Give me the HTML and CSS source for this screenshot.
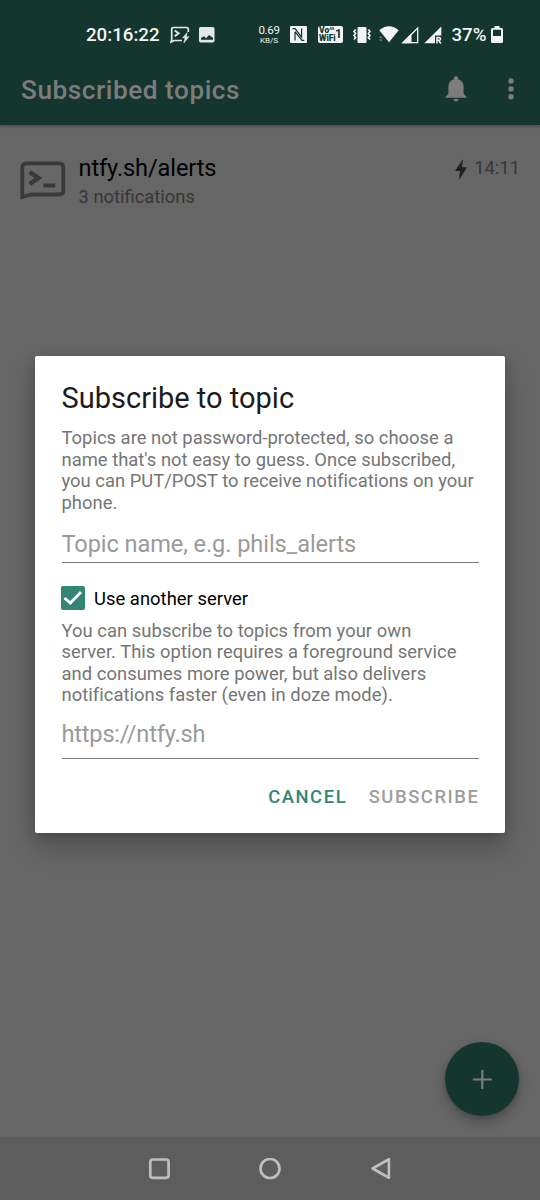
FILE: index.html
```html
<!DOCTYPE html>
<html lang="en">
<head>
<meta charset="utf-8">
<title>Subscribed topics</title>
<link rel="stylesheet" href="styles.css">
</head>
<body>
<div class="screen">
  <header class="top">
    <div class="status">
      <span class="clock">20:16:22</span>
      <svg class="st-ntfy" width="20" height="18" viewBox="0 0 20 18" fill="none" stroke="currentColor"><path stroke-width="1.7" d="M12 14.5H4L1 16.1l.7-2.400V3.200Q1.700 1.500 3.400 1.500H16.500Q18.300 1.500 18.300 3.200V6"/><path stroke-width="2" d="M4.700 4.500L8.600 7.300L4.700 10.200"/><path fill="currentColor" stroke="currentColor" stroke-width=".5" d="M17.200 6.500L12.600 11.800H15L13.800 17L19 10.700H16.300Z"/></svg>
      <svg class="st-image" width="16" height="16" viewBox="0 0 16 16"><rect width="15.500" height="15.500" rx="1.700" fill="currentColor"/><path class="cut" d="M2 12.800V11L5 9.200L7.100 11.300L10 8L14 10.800V12.800Z"/></svg>
      <span class="speed"><b>0.69</b><small>KB/S</small></span>
      <svg class="st-nfc" width="17" height="17" viewBox="0 0 17 17"><rect width="17" height="17" rx="1" fill="currentColor"/><path class="cut-line" stroke-width="1.200" d="M2.500 2.700H5L11.600 11.200V2.500M5 6V14.500M14.300 14.300H12L5 5.600"/></svg>
      <span class="vowifi"><span class="vw-text"><span>Vo<sup>ʌʌ</sup></span><span>WiFi</span></span><span class="vw-one">1</span></span>
      <svg class="st-vibrate" width="18" height="18" viewBox="0 0 18 18"><rect x="4.500" y="1" width="9" height="16" rx="1" fill="currentColor"/><path fill="none" stroke="currentColor" stroke-width="1.700" d="M2.600 3.500L1 5.500L2.600 7.500L1 9.500L2.600 11.500L1 13.500M15.400 3.500L17 5.500L15.400 7.500L17 9.500L15.400 11.500L17 13.500"/></svg>
      <svg class="st-wifi" width="20" height="17" viewBox="0 0 20 17"><path fill="currentColor" d="M.3 4.300Q10-3.800 19.700 4.300L10 16.300Z"/><path class="arrows" d="M0 12l1.800-2 1.800 2zM0 13.500h3.600L1.800 15.500z"/></svg>
      <svg class="st-sig" width="18" height="18" viewBox="0 0 18 18"><path fill="none" stroke="currentColor" stroke-width="1.300" d="M2 16.700L16.700 2V16.700Z"/><path fill="currentColor" d="M.5 17.300L10.500 7.500V17.300Z"/></svg>
      <svg class="st-sig2" width="18" height="18" viewBox="0 0 18 18"><path fill="currentColor" d="M.3 17.300L17.300.5V9.500H11V17.300Z"/><path fill="none" stroke="currentColor" stroke-width="1.500" d="M13 17.500V11.500H15Q16.500 11.500 16.500 12.900T15 14.300H13M14.700 14.300L16.800 17.500"/></svg>
      <span class="percent">37%</span>
      <svg class="st-batt" width="12" height="17" viewBox="0 0 12 17"><path fill="currentColor" fill-rule="evenodd" d="M3.500 0h5v2H10.500Q12 2 12 3.500V15.500Q12 17 10.500 17H1.500Q0 17 0 15.500V3.500Q0 2 1.500 2h2zM2 3.800V10H10V3.800Z"/></svg>
    </div>
    <div class="appbar">
      <h1>Subscribed topics</h1>
      <svg class="bell" width="22" height="26" viewBox="0 0 22 26" fill="currentColor"><path d="M11 .2Q13.200.2 13.200 2.400V3.200Q18.600 4.700 18.600 11V18L21.500 20.700V21.800H.5V20.700L3.400 18V11Q3.400 4.700 8.800 3.200V2.400Q8.800.2 11 .2Z"/><path d="M8.300 23H13.700Q13.300 25.500 11 25.500T8.300 23Z"/></svg>
      <svg class="dots" width="6" height="22" viewBox="0 0 6 22" fill="currentColor"><circle cx="3" cy="3" r="2.700"/><circle cx="3" cy="10.900" r="2.700"/><circle cx="3" cy="18.800" r="2.700"/></svg>
    </div>
  </header>
  <main class="list">
    <div class="row">
      <svg class="topic-icon" width="46" height="40" viewBox="0 0 46 40" fill="none" stroke="currentColor"><path stroke-width="3.800" d="M2.300 36.100V6.300Q2.300 2.300 6.300 2.300H39.300Q43.300 2.300 43.300 6.300V29.500Q43.300 33.500 39.300 33.500H11.500Z"/><path stroke-width="4.300" d="M9.600 11.100L18.500 17L9.600 22.900"/><path stroke-width="4" d="M23.500 24.500H35.200"/></svg>
      <div class="topic"><div class="name">ntfy.sh/alerts</div><div class="count">3 notifications</div></div>
      <svg class="bolt" width="12" height="21" viewBox="0 0 12 21" fill="currentColor"><path d="M8 0L0 12H5L4 21L12 8.200H7Z"/></svg>
      <time>14:11</time>
    </div>
    <button class="fab" aria-label="Add"><svg width="20" height="20" viewBox="0 0 20 20" fill="none" stroke="currentColor" stroke-width="2.200"><path d="M10.300 1V20M.8 10.500H19.800"/></svg></button>
  </main>
  <nav class="nav">
    <svg width="22" height="22" viewBox="0 0 22 22"><rect x="2.300" y="1.500" width="18.300" height="18.300" rx="2.500"/></svg>
    <svg width="22" height="22" viewBox="0 0 22 22"><circle cx="11" cy="10.500" r="9.500"/></svg>
    <svg width="22" height="22" viewBox="0 0 22 22"><path d="M18.900 1.300V19.700L2.600 10.500Z"/></svg>
  </nav>
  <section class="dialog">
    <h2>Subscribe to topic</h2>
    <p class="intro">Topics are not password-protected, so choose a<br>name that's not easy to guess. Once subscribed,<br>you can PUT/POST to receive notifications on your<br>phone.</p>
    <div class="field field-topic">Topic name, e.g. phils_alerts</div>
    <div class="check"><svg width="24" height="24" viewBox="0 0 24 24"><rect width="24" height="24" rx="2" class="box"/><path class="tick" d="M3.500 12L9.300 17L20 6"/></svg><span>Use another server</span></div>
    <p class="hint">You can subscribe to topics from your own<br>server. This option requires a foreground service<br>and consumes more power, but also delivers<br>notifications faster (even in doze mode).</p>
    <div class="field field-url">https://ntfy.sh</div>
    <div class="actions"><span class="cancel">CANCEL</span><span class="subscribe">SUBSCRIBE</span></div>
  </section>
</div>
</body>
</html>
```
FILE: styles.css
```css
* { box-sizing: border-box; }
body { margin: 0; font-family: Roboto, "Liberation Sans", sans-serif; }
svg { display: block; flex: none; }
h1, h2, p { margin: 0; font-weight: 400; }
.screen { position: relative; width: 540px; height: 1200px; display: flex; flex-direction: column; background: #666; overflow: hidden; white-space: nowrap; }
.top { height: 125px; background: #15362e; box-shadow: 0 1px 3px rgba(0,0,0,.35); }
.status { height: 55px; padding: 14px 0 0 86px; display: flex; align-items: center; color: #f3f5f4; }
.clock { width: 84px; font-size: 18.700px; font-weight: 500; }
.st-image { margin-left: 9px; }
.cut { fill: #15362e; }
.cut-line { fill: none; stroke: #15362e; }
.st-ntfy, .st-image { color: #e3e8e6; }
.speed { margin-left: 43px; width: 22px; display: flex; flex-direction: column; align-items: center; }
.speed b { font-size: 11.500px; line-height: 12px; font-weight: 400; letter-spacing: -.3px; }
.speed small { font-size: 8px; line-height: 9px; }
.st-nfc { margin-left: 10px; }
.vowifi { margin-left: 11px; width: 25px; height: 17px; border-radius: 2px; background: #f3f5f4; color: #15362e; display: flex; align-items: center; justify-content: space-between; padding: 0 1px; font-weight: 900; }
.vw-text { display: flex; flex-direction: column; font-size: 8.500px; line-height: 7.800px; }
.vw-text span { height: 7.800px; }
.vw-text sup { font-size: 5px; line-height: 1px; letter-spacing: -.5px; vertical-align: 3px; }
.vw-one { font-size: 12px; font-weight: 700; margin-left: -3px; margin-top: -1px; }
.st-vibrate { margin-left: 10px; }
.st-wifi { margin-left: 8px; }
.st-sig { margin-left: 2px; }
.st-sig2 { margin-left: 5px; }
.arrows { fill: #73867f; }
.percent { margin-left: 9.500px; width: 39.500px; font-size: 18.700px; font-weight: 500; }
.appbar { height: 70px; padding: 0 26px 1px 21px; display: flex; align-items: center; color: #7c7c7c; }
.appbar h1 { flex: 1; font-size: 26.200px; font-weight: 500; letter-spacing: .530px; }
.bell { margin: 0 41px 2px 0; }
.dots { margin-bottom: 2px; }
.list { flex: 1; padding: 28px 20px 0; position: relative; }
.row { display: flex; align-items: flex-start; }
.topic-icon { margin-top: 8px; color: #393939; }
.topic { flex: 1; padding-left: 12.500px; }
.name { font-size: 23.600px; line-height: 31px; letter-spacing: -.120px; color: #000; }
.count { font-size: 18.400px; line-height: 25px; color: #373737; }
.bolt { margin-top: 6px; margin-right: 7px; color: #202020; }
time { font-size: 18.400px; line-height: 30px; color: #373737; }
.fab { position: absolute; right: 21px; bottom: 21px; width: 74px; height: 74px; border: 0; border-radius: 50%; padding: 0; display: grid; place-items: center; background: #15362e; color: #7c7c7c; box-shadow: 0 6px 13px rgba(0,0,0,.22), 0 2px 5px rgba(0,0,0,.15); }
.nav { height: 63px; background: #5d5d5d; display: flex; align-items: center; justify-content: center; gap: 89px; }
.nav svg { fill: none; stroke: #bebebe; stroke-width: 2.700; stroke-linejoin: round; }
.dialog { position: absolute; left: 35px; top: 356px; width: 470px; height: 477px; padding: 24px 26px 0 26.500px; border-radius: 2px; background: #fff; box-shadow: 0 14px 28px rgba(0,0,0,.22), 0 3px 12px rgba(0,0,0,.15); }
.dialog h2 { font-size: 29px; line-height: 36px; color: #1c1c1c; }
.dialog p { font-size: 18.400px; line-height: 21.500px; color: #757575; }
.dialog .intro { padding-top: 11px; letter-spacing: .010px; }
.field { font-size: 23.600px; color: #9a9a9a; letter-spacing: -.090px; }
.field-topic { height: 50px; padding-top: 16.500px; line-height: 28px; border-bottom: 1.500px solid #777; }
.check { display: flex; align-items: center; gap: 9px; height: 24px; margin: 23px 0 0 -.5px; font-size: 18.400px; letter-spacing: .030px; color: #000; }
.box { fill: #338574; }
.tick { fill: none; stroke: #fff; stroke-width: 2.800; }
.dialog .hint { padding-top: 9.500px; letter-spacing: .040px; }
.field-url { height: 53px; padding-top: 14px; line-height: 28px; letter-spacing: -.200px; border-bottom: 1.500px solid #777; }
.actions { display: flex; justify-content: flex-end; gap: 21.500px; margin-top: 27.500px; font-size: 18.400px; line-height: 22px; font-weight: 500; letter-spacing: 1.570px; }
.cancel { color: #338574; }
.subscribe { color: #9d9d9d; margin-right: -.5px; }
```
